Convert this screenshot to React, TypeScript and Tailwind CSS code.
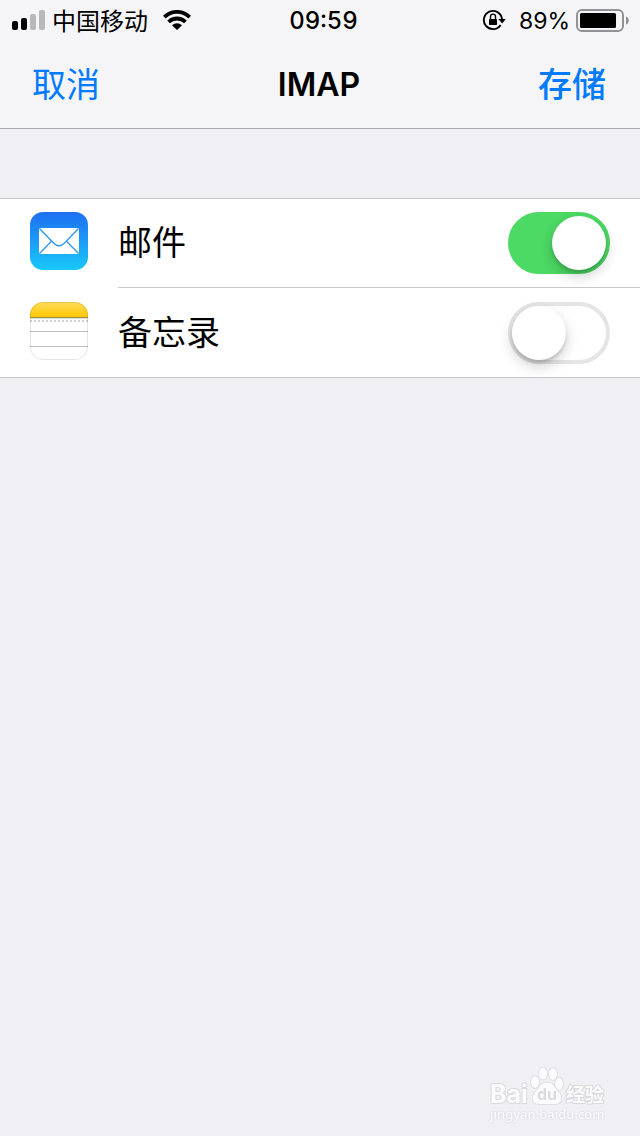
import { ReactNode, useState } from "react";

interface AccountRowProps {
  id: string;
  label: string;
  icon: ReactNode;
  defaultOn?: boolean;
  last?: boolean;
}

function SignalIcon() {
  return (
    <svg width="34" height="20" viewBox="0 0 34 20" aria-hidden="true">
      <rect x="0" y="11" width="6" height="9" rx="2" />
      <rect x="9" y="8" width="6" height="12" rx="2" />
      <rect x="18" y="4" width="6" height="16" rx="2" fill="#b8b8b9" />
      <rect x="27" y="0" width="6" height="20" rx="2" fill="#b8b8b9" />
    </svg>
  );
}

function WifiIcon() {
  return (
    <svg width="28" height="20" viewBox="0 0 28 20" aria-hidden="true">
      <g fill="none" stroke="#000" strokeWidth="3.8">
        <path d="M1.3 7.1 A18 18 0 0 1 26.7 7.1" />
        <path d="M5.6 12 A11.8 11.8 0 0 1 22.4 12" />
      </g>
      <path d="M9 15.2 A7.7 7.7 0 0 1 19 15.2 L14 20 Z" />
    </svg>
  );
}

function RotationLockIcon() {
  return (
    <svg width="24" height="22" viewBox="0 0 24 22" aria-hidden="true">
      <path d="M18.6 16 A9.1 9.1 0 1 1 20 10" fill="none" stroke="#000" strokeWidth="1.9" />
      <path d="M16.4 10 H23.8 L20.2 14.4 Z" />
      <rect x="7" y="10" width="8" height="6" rx="0.8" />
      <path d="M8.5 10.5 V7.6 A2.5 2.5 0 0 1 13.5 7.6 V10.5" fill="none" stroke="#000" strokeWidth="1.4" />
    </svg>
  );
}

function BatteryIcon() {
  return (
    <svg width="53" height="24" viewBox="0 0 53 24" aria-hidden="true">
      <rect x="1" y="2" width="46" height="21" rx="5" fill="none" stroke="#929294" strokeWidth="2" />
      <rect x="4" y="5" width="36" height="15" rx="1.5" />
      <path d="M50 8.5 C53.7 9.5 53.7 15.5 50 16.5 Z" fill="#929294" />
    </svg>
  );
}

function MailIcon() {
  return (
    <svg width="58" height="58" viewBox="0 0 58 58" aria-hidden="true">
      <defs>
        <linearGradient id="mail-bg" x1="0" y1="0" x2="0" y2="1">
          <stop offset="0" stopColor="#1e6ff2" />
          <stop offset="1" stopColor="#19c8fb" />
        </linearGradient>
      </defs>
      <rect width="58" height="58" rx="13" fill="url(#mail-bg)" />
      <rect x="9" y="16" width="40" height="26" rx="1" fill="#fff" />
      <g fill="none" stroke="#2b97f5" strokeWidth="1.3">
        <path d="M9.5 16.5 L23.5 31 Q29 36.5 34.5 31 L48.5 16.5" />
        <path d="M9.5 41.5 L21.5 29.3" />
        <path d="M48.5 41.5 L36.5 29.3" />
      </g>
    </svg>
  );
}

function NotesIcon() {
  return (
    <svg width="58" height="58" viewBox="0 0 58 58" aria-hidden="true">
      <defs>
        <linearGradient id="notes-top" x1="0" y1="0" x2="0" y2="1">
          <stop offset="0" stopColor="#ffdc58" />
          <stop offset="1" stopColor="#fdc905" />
        </linearGradient>
        <clipPath id="notes-clip">
          <rect width="58" height="58" rx="13" />
        </clipPath>
      </defs>
      <g clipPath="url(#notes-clip)">
        <rect width="58" height="58" fill="#fff" />
        <rect width="58" height="15" fill="url(#notes-top)" />
        <rect y="15" width="58" height="1" fill="#a98f3b" />
        <rect y="16" width="58" height="1" fill="#dededf" />
        <path d="M0 19 H58" stroke="#cfcfcf" strokeWidth="2" strokeDasharray="2 2" />
        <rect y="29" width="58" height="1" fill="#bdbdbd" />
        <rect y="44" width="58" height="1" fill="#bdbdbd" />
      </g>
      <rect x="0.5" y="0.5" width="57" height="57" rx="12.5" fill="none" stroke="#000" strokeOpacity="0.1" />
    </svg>
  );
}

function AccountRow({ id, label, icon, defaultOn = false, last = false }: AccountRowProps) {
  const [on, setOn] = useState(defaultOn);

  return (
    <li className="flex h-[90px] pl-[30px]">
      <span className="mt-[14px] shrink-0">{icon}</span>
      <div
        className={`ml-[30px] flex flex-1 items-start justify-between pt-[14px] pr-[30px] ${
          last ? "" : "border-b border-[#c8c7cc]"
        }`}
      >
        <label htmlFor={id} className="text-[34px] leading-[62px]">
          {label}
        </label>
        <input
          id={id}
          type="checkbox"
          role="switch"
          checked={on}
          onChange={(e) => setOn(e.target.checked)}
          className="h-[62px] w-[102px] cursor-pointer appearance-none rounded-full border-4 border-[#e5e5e5] bg-white before:block before:size-[54px] before:rounded-full before:bg-white before:shadow-[0_6px_14px_rgba(0,0,0,0.2),0_3px_3px_rgba(0,0,0,0.12)] checked:border-[#4cd964] checked:bg-[#4cd964] checked:before:ml-auto"
        />
      </div>
    </li>
  );
}

function Watermark() {
  return (
    <div className="fixed right-[36px] bottom-[14px] w-[114px] text-[#fbfbfd]" aria-hidden="true">
      <div className="flex h-10 items-end justify-between font-bold [paint-order:stroke] [-webkit-text-stroke:2px_#dadadd]">
        <span className="pb-[2px] text-[25px] leading-5">Bai</span>
        <span className="relative">
          <svg width="34" height="40" viewBox="0 0 34 40" fill="#fbfbfd" stroke="#dadadd" strokeWidth="1.5">
            <ellipse cx="5" cy="16" rx="4" ry="6" />
            <ellipse cx="13" cy="7.5" rx="4" ry="6" />
            <ellipse cx="23" cy="8" rx="4" ry="6" />
            <ellipse cx="29" cy="18" rx="4" ry="6" />
            <path d="M17 16.5 C22 16.5 24 20 27 24 C34 31 32 38 25 38 H9 C2 38 0 31 7 24 C10 20 12 16.5 17 16.5 Z" />
          </svg>
          <span className="absolute inset-x-0 bottom-1 text-center text-[16px] leading-4 text-[#dadadd] [-webkit-text-stroke:0]">
            du
          </span>
        </span>
        <span className="text-[19px] leading-5">经验</span>
      </div>
      <div className="font-['Noto_Sans'] text-[13px] leading-4 font-medium whitespace-nowrap [text-shadow:0_0_2px_#c8c8cc]">
        jingyan.baidu.com
      </div>
    </div>
  );
}

export default function App() {
  return (
    <div className="min-h-screen bg-[#efeff4] font-['Inter','Noto_Sans_CJK_SC',sans-serif] text-black">
      <header className="border-b border-[#a7a7ac] bg-[#f5f5f7]">
        <div className="grid h-10 grid-cols-[1fr_auto_1fr] items-center pr-[11px] pl-3 text-[24px] leading-9">
          <div className="flex items-center">
            <SignalIcon />
            <span className="ml-[6px] pt-[3px]">中国移动</span>
            <span className="ml-[15px]">
              <WifiIcon />
            </span>
          </div>
          <time className="pt-[2px] pl-[6px] font-medium tabular-nums">09:59</time>
          <div className="flex items-center justify-end">
            <RotationLockIcon />
            <span className="ml-[13px] pt-[2px] text-[23px]">89%</span>
            <span className="ml-[6px]">
              <BatteryIcon />
            </span>
          </div>
        </div>
        <nav className="grid h-[88px] grid-cols-[1fr_auto_1fr] pt-[2px] pr-[34px] pl-8 text-[34px] leading-[86px]">
          <button type="button" className="justify-self-start text-[#007aff]">
            取消
          </button>
          <h1 className="text-[32px] font-semibold">IMAP</h1>
          <button type="button" className="justify-self-end font-medium text-[#007aff]">
            存储
          </button>
        </nav>
      </header>

      <main className="pt-[69px]">
        <ul className="bg-white shadow-[inset_0_1px_0_#c8c7cc,inset_0_-1px_0_#c8c7cc]">
          <AccountRow id="mail" label="邮件" icon={<MailIcon />} defaultOn />
          <AccountRow id="notes" label="备忘录" icon={<NotesIcon />} last />
        </ul>
      </main>

      <Watermark />
    </div>
  );
}
